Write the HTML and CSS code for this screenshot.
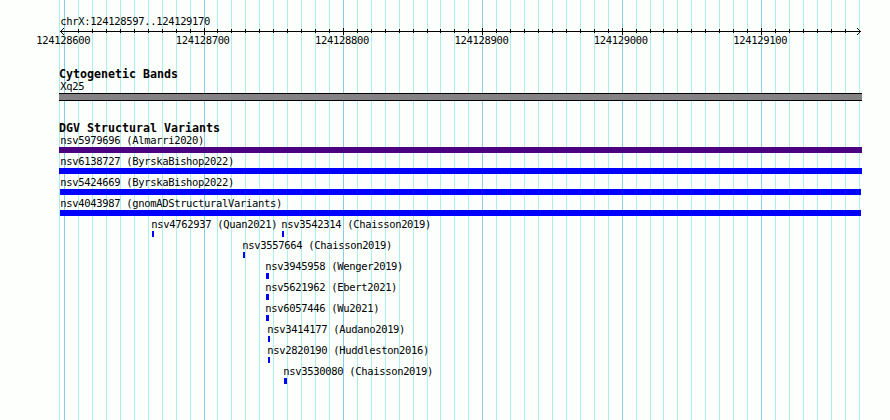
FILE: index.html
```
<!DOCTYPE html>
<html lang="en">
<head>
  <meta charset="UTF-8" />
  <title>chrX:124128597..124129170</title>
  <link rel="stylesheet" href="styles.css">
</head>
<body>
  <div class="panel">
    <!-- Grid lines behind the tracks -->
    <svg class="grid" width="890" height="420">
      <path class="minor" d="M59.5 0V420M78.5 0V420M92.5 0V420M106.5 0V420M120.5 0V420M134.5 0V420M148.5 0V420M162.5 0V420M176.5 0V420M190.5 0V420M217.5 0V420M231.5 0V420M245.5 0V420M259.5 0V420M273.5 0V420M287.5 0V420M301.5 0V420M315.5 0V420M329.5 0V420M357.5 0V420M371.5 0V420M385.5 0V420M399.5 0V420M413.5 0V420M427.5 0V420M440.5 0V420M454.5 0V420M468.5 0V420M496.5 0V420M510.5 0V420M524.5 0V420M538.5 0V420M552.5 0V420M566.5 0V420M580.5 0V420M594.5 0V420M608.5 0V420M636.5 0V420M650.5 0V420M663.5 0V420M677.5 0V420M691.5 0V420M705.5 0V420M719.5 0V420M733.5 0V420M747.5 0V420M775.5 0V420M789.5 0V420M803.5 0V420M817.5 0V420M831.5 0V420M845.5 0V420M859.5 0V420" />
      <path class="major" d="M64.5 0V420M204.5 0V420M343.5 0V420M482.5 0V420M622.5 0V420M761.5 0V420" />
    </svg>

    <!-- Ruler -->
    <div class="ruler">
      <div class="label region">chrX:124128597..124129170</div>
      <svg class="axis" width="890" height="7">
        <path d="M60 3.5H861M63.5 0V1M62.5 1V2M61.5 2V3M61.5 4V5M62.5 5V6M63.5 6V7M857.5 0V1M858.5 1V2M859.5 2V3M859.5 4V5M858.5 5V6M857.5 6V7" />
        <path d="M78.5 1V5M92.5 1V5M106.5 1V5M120.5 1V5M134.5 1V5M148.5 1V5M162.5 1V5M176.5 1V5M190.5 1V5M217.5 1V5M231.5 1V5M245.5 1V5M259.5 1V5M273.5 1V5M287.5 1V5M301.5 1V5M315.5 1V5M329.5 1V5M357.5 1V5M371.5 1V5M385.5 1V5M399.5 1V5M413.5 1V5M427.5 1V5M440.5 1V5M454.5 1V5M468.5 1V5M496.5 1V5M510.5 1V5M524.5 1V5M538.5 1V5M552.5 1V5M566.5 1V5M580.5 1V5M594.5 1V5M608.5 1V5M636.5 1V5M650.5 1V5M663.5 1V5M677.5 1V5M691.5 1V5M705.5 1V5M719.5 1V5M733.5 1V5M747.5 1V5M775.5 1V5M789.5 1V5M803.5 1V5M817.5 1V5M831.5 1V5M845.5 1V5" />
        <path d="M204.5 0V7M343.5 0V7M482.5 0V7M622.5 0V7M761.5 0V7" />
      </svg>
      <div class="label numbers">
        <span>124128600</span>
        <span>124128700</span>
        <span>124128800</span>
        <span>124128900</span>
        <span>124129000</span>
        <span>124129100</span>
      </div>
    </div>

    <!-- Cytogenetic bands -->
    <div class="track">
      <h2>Cytogenetic Bands</h2>
      <div class="label band-name">Xq25</div>
      <div class="band"></div>
    </div>

    <!-- Structural variants -->
    <div class="track">
      <h2>DGV Structural Variants</h2>
      <div class="row">
        <div class="feature wide" style="margin-left: 0px"><div class="label">nsv5979696 (Almarri2020)</div><div class="bar mixed" style="width: 803px"></div></div>
      </div>
      <div class="row">
        <div class="feature wide" style="margin-left: 0px"><div class="label">nsv6138727 (ByrskaBishop2022)</div><div class="bar" style="width: 803px"></div></div>
      </div>
      <div class="row">
        <div class="feature" style="margin-left: 1px"><div class="label">nsv5424669 (ByrskaBishop2022)</div><div class="bar" style="width: 801px"></div></div>
      </div>
      <div class="row">
        <div class="feature" style="margin-left: 1px"><div class="label">nsv4043987 (gnomADStructuralVariants)</div><div class="bar" style="width: 801px"></div></div>
      </div>
      <div class="row">
        <div class="feature small" style="margin-left: 93px; width: 130px"><div class="label">nsv4762937 (Quan2021)</div><div class="bar" style="width: 2px"></div></div>
        <div class="feature small"><div class="label">nsv3542314 (Chaisson2019)</div><div class="bar" style="width: 2px"></div></div>
      </div>
      <div class="row">
        <div class="feature small" style="margin-left: 184px"><div class="label">nsv3557664 (Chaisson2019)</div><div class="bar" style="width: 2px"></div></div>
      </div>
      <div class="row">
        <div class="feature small" style="margin-left: 207px"><div class="label">nsv3945958 (Wenger2019)</div><div class="bar" style="width: 3px"></div></div>
      </div>
      <div class="row">
        <div class="feature small" style="margin-left: 207px"><div class="label">nsv5621962 (Ebert2021)</div><div class="bar" style="width: 3px"></div></div>
      </div>
      <div class="row">
        <div class="feature small" style="margin-left: 207px"><div class="label">nsv6057446 (Wu2021)</div><div class="bar" style="width: 3px"></div></div>
      </div>
      <div class="row">
        <div class="feature small" style="margin-left: 209px"><div class="label">nsv3414177 (Audano2019)</div><div class="bar" style="width: 2px"></div></div>
      </div>
      <div class="row">
        <div class="feature small" style="margin-left: 209px"><div class="label">nsv2820190 (Huddleston2016)</div><div class="bar" style="width: 2px"></div></div>
      </div>
      <div class="row">
        <div class="feature small" style="margin-left: 225px"><div class="label">nsv3530080 (Chaisson2019)</div><div class="bar" style="width: 3px"></div></div>
      </div>
    </div>
  </div>
</body>
</html>
```
FILE: styles.css
```
body {
  margin: 0;
  background-color: #fcfffc;
  color: #000;
  font-family: "DejaVu Sans Mono", monospace;
}
.panel {
  position: relative;
  width: 890px;
  height: 420px;
  overflow: hidden;
  box-sizing: border-box;
  padding-top: 16px;
}
.grid {
  position: absolute;
  top: 0;
  left: 0;
  z-index: -1;
}
.grid path, .axis path {
  fill: none;
  stroke-width: 1;
  shape-rendering: crispEdges;
}
.grid .minor {
  stroke: #afeeee;
}
.grid .major {
  stroke: #87ceeb;
}
.axis {
  display: block;
}
.axis path {
  stroke: #000;
}
.label {
  height: 12px;
  font-size: 10.5px;
  line-height: 10px;
  letter-spacing: -0.33px;
  text-indent: 0.3px;
  white-space: nowrap;
}
.region {
  padding-left: 60px;
}
.numbers {
  display: flex;
  gap: 85.4px;
  padding-left: 36px;
}
.numbers span {
  width: 54px;
}
.track {
  padding-left: 59px;
  margin-top: 21px;
}
h2 {
  margin: 0;
  height: 13px;
  font-size: 11.63px;
  line-height: 12px;
  font-weight: bold;
  white-space: nowrap;
}
.band-name {
  padding-left: 1px;
}
.band {
  box-sizing: border-box;
  width: 803px;
  height: 8px;
  background-color: #848284;
  border-top: 1px solid #000;
  border-bottom: 1px solid #000;
}
.row {
  display: flex;
  height: 18px;
  margin-bottom: 3px;
}
.wide .label {
  padding-left: 1px;
}
.small .label {
  margin-left: -1px;
}
.bar {
  height: 6px;
  background-color: #0000ff;
}
.mixed {
  background-color: #4b0082;
}
```
